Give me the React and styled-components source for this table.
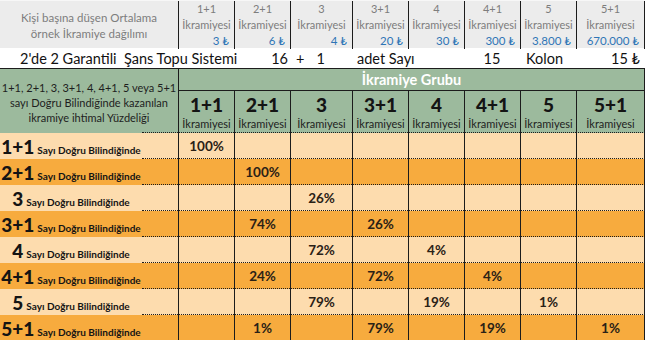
import React from "react";
import styled, { createGlobalStyle } from "styled-components";

const GlobalStyle = createGlobalStyle`
  html, body {
    margin: 0;
    padding: 0;
    background: #ffffff;
  }
  * {
    box-sizing: border-box;
  }
`;

const COLS = "178px 56px 56px 62px 56px 56px 56px 56px 69px";
const LINE = "#1c1c1c";

const Page = styled.div`
  width: 647px;
  height: 340px;
  overflow: hidden;
  font-family: Lato, "Liberation Sans", sans-serif;
  color: #111;
  background: #ffffff;
`;

const Sheet = styled.div`
  width: 645px;
`;

/* ---- top band with the average prize per person ---- */

const PriceBand = styled.div`
  display: grid;
  grid-template-columns: ${COLS};
  height: 48px;
  background: #ececec;
  border-top: 1px solid #f7f7f7;
`;

const BandTitle = styled.div`
  display: flex;
  align-items: center;
  justify-content: center;
  text-align: center;
  font-size: 11.5px;
  line-height: 16px;
  color: #7d7d7d;
  padding-top: 2px;
`;

const PriceCell = styled.div`
  display: flex;
  flex-direction: column;
  border-left: 1px solid ${LINE};
  border-right: ${(p) => (p.$last ? `1px solid ${LINE}` : "none")};
  font-size: 11px;
  line-height: 16px;
  color: #7d7d7d;
  text-align: center;
  white-space: nowrap;
`;

const PriceValue = styled.span`
  color: #2e75b6;
  text-align: right;
  padding-right: 5px;
  font-size: 11.5px;
`;

/* ---- white system row ---- */

const SystemRow = styled.div`
  display: grid;
  grid-template-columns: ${COLS};
  height: 20px;
  align-items: center;
  font-size: 14.5px;
  white-space: nowrap;
`;

const SysCell = styled.div`
  padding: 0 ${(p) => p.$pad || 0}px;
  text-align: ${(p) => p.$align || "left"};
  overflow: visible;
`;

const PlusOne = styled.div`
  display: flex;
  gap: 12px;
  padding-left: 6px;
`;

/* ---- green header ---- */

const GreenHead = styled.div`
  display: grid;
  grid-template-columns: ${COLS};
  grid-template-rows: 22px 42px;
  background: #9cba9d;
  border-top: 1px solid ${LINE};
`;

const HeadNote = styled.div`
  grid-row: 1 / span 2;
  display: flex;
  align-items: center;
  justify-content: center;
  text-align: center;
  font-size: 11px;
  line-height: 15px;
  color: #1e1e1e;
  padding-top: 2px;
  position: relative;
  &::after {
    content: "";
    position: absolute;
    left: 142px;
    right: 0;
    bottom: 0;
    border-bottom: 1px dotted ${LINE};
  }
`;

const GroupTitle = styled.div`
  grid-column: 2 / span 8;
  display: flex;
  align-items: center;
  justify-content: center;
  color: #ffffff;
  font-weight: 700;
  font-size: 14.5px;
  border-left: 1px solid ${LINE};
  border-right: 1px solid ${LINE};
  border-bottom: 1px solid ${LINE};
`;

const ColHead = styled.div`
  display: flex;
  flex-direction: column;
  align-items: center;
  justify-content: center;
  border-left: 1px solid ${LINE};
  border-right: ${(p) => (p.$last ? `1px solid ${LINE}` : "none")};
  border-bottom: 1px dotted ${LINE};
  white-space: nowrap;
  padding-top: 2px;
`;

const ColNum = styled.span`
  font-size: 19px;
  font-weight: 900;
  line-height: 22px;
  color: #141414;
`;

const ColWord = styled.span`
  font-size: 11px;
  line-height: 15px;
  color: #1e1e1e;
`;

/* ---- data rows ---- */

const DataRow = styled.div`
  display: grid;
  grid-template-columns: ${COLS};
  height: 26px;
  background: ${(p) => (p.$dark ? "#f7ab3e" : "#fddcae")};
`;

const Label = styled.div`
  display: grid;
  grid-template-columns: 142px 36px;
`;

const LabelText = styled.div`
  display: flex;
  align-items: baseline;
  justify-content: center;
  gap: 3px;
  white-space: nowrap;
  padding-top: 2px;
`;

const LabelTail = styled.div`
  border-bottom: 1px ${(p) => (p.$last ? "solid" : "dotted")} ${LINE};
`;

const LabelNum = styled.span`
  font-size: 19px;
  font-weight: 900;
  color: #141414;
`;

const LabelWord = styled.span`
  font-size: 10px;
  font-weight: 700;
  color: #141414;
`;

const Value = styled.div`
  display: flex;
  align-items: center;
  justify-content: center;
  border-left: 1px solid ${LINE};
  border-right: ${(p) => (p.$lastCol ? `1px solid ${LINE}` : "none")};
  border-bottom: 1px ${(p) => (p.$last ? "solid" : "dotted")} ${LINE};
  font-size: 13.5px;
  font-weight: 700;
  color: #2a2116;
`;

const groups = ["1+1", "2+1", "3", "3+1", "4", "4+1", "5", "5+1"];
const prices = ["3 ₺", "6 ₺", "4 ₺", "20 ₺", "30 ₺", "300 ₺", "3.800 ₺", "670.000 ₺"];

const rows = [
  { label: "1+1", vals: { 0: "100%" } },
  { label: "2+1", vals: { 1: "100%" } },
  { label: "3", vals: { 2: "26%" } },
  { label: "3+1", vals: { 1: "74%", 3: "26%" } },
  { label: "4", vals: { 2: "72%", 4: "4%" } },
  { label: "4+1", vals: { 1: "24%", 3: "72%", 5: "4%" } },
  { label: "5", vals: { 2: "79%", 4: "19%", 6: "1%" } },
  { label: "5+1", vals: { 1: "1%", 3: "79%", 5: "19%", 7: "1%" } },
];

const App = () => {
  return (
    <Page>
      <GlobalStyle />
      <Sheet>
        <PriceBand>
          <BandTitle>
            Kişi başına düşen Ortalama
            <br />
            örnek İkramiye dağılımı
          </BandTitle>
          {groups.map((g, i) => (
            <PriceCell key={g} $last={i === groups.length - 1}>
              <span>{g}</span>
              <span>İkramiyesi</span>
              <PriceValue>{prices[i]}</PriceValue>
            </PriceCell>
          ))}
        </PriceBand>

        <SystemRow>
          <SysCell $pad={20}>2'de 2 Garantili&nbsp; Şans Topu Sistemi</SysCell>
          <SysCell />
          <SysCell $align="right" $pad={2}>16</SysCell>
          <PlusOne>
            <span>+</span>
            <span>1</span>
          </PlusOne>
          <SysCell $pad={5}>adet Sayı</SysCell>
          <SysCell />
          <SysCell $align="center">15</SysCell>
          <SysCell $pad={6}>Kolon</SysCell>
          <SysCell $align="right" $pad={5}>15 ₺</SysCell>
        </SystemRow>

        <GreenHead>
          <HeadNote>
            1+1, 2+1, 3, 3+1, 4, 4+1, 5 veya 5+1
            <br />
            sayı Doğru Bilindiğinde kazanılan
            <br />
            ikramiye ihtimal Yüzdeliği
          </HeadNote>
          <GroupTitle>İkramiye Grubu</GroupTitle>
          {groups.map((g, i) => (
            <ColHead key={g} $last={i === groups.length - 1}>
              <ColNum>{g}</ColNum>
              <ColWord>İkramiyesi</ColWord>
            </ColHead>
          ))}
        </GreenHead>

        {rows.map((r, ri) => {
          const last = ri === rows.length - 1;
          return (
            <DataRow key={r.label} $dark={ri % 2 === 1}>
              <Label>
                <LabelText>
                  <LabelNum>{r.label}</LabelNum>
                  <LabelWord>Sayı Doğru Bilindiğinde</LabelWord>
                </LabelText>
                <LabelTail $last={last} />
              </Label>
              {groups.map((g, ci) => (
                <Value key={g} $last={last} $lastCol={ci === groups.length - 1}>
                  {r.vals[ci] || ""}
                </Value>
              ))}
            </DataRow>
          );
        })}
      </Sheet>
    </Page>
  );
};

export default App;
